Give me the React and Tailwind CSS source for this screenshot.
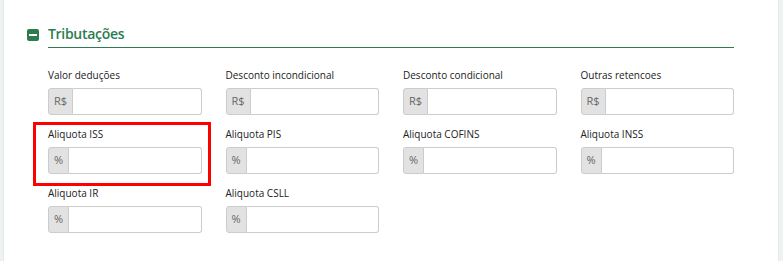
const FIELDS = [
  { label: 'Valor deduções', addon: 'R$' },
  { label: 'Desconto incondicional', addon: 'R$' },
  { label: 'Desconto condicional', addon: 'R$' },
  { label: 'Outras retencoes', addon: 'R$' },
  { label: 'Aliquota ISS', addon: '%', highlight: true },
  { label: 'Aliquota PIS', addon: '%' },
  { label: 'Aliquota COFINS', addon: '%' },
  { label: 'Aliquota INSS', addon: '%' },
  { label: 'Aliquota IR', addon: '%' },
  { label: 'Aliquota CSLL', addon: '%' },
];

function Field({ label, addon, highlight }) {
  return (
    <div className="relative">
      {highlight && (
        <div className="absolute -left-[15px] -right-[9px] -top-[5px] -bottom-[12px] border-[3px] border-[#ff0000] pointer-events-none" />
      )}
      <label className="block text-[10px] leading-[15px] text-[#222] mb-[5px]">{label}</label>
      <div className="flex h-[27px]">
        <span
          className={`flex items-center justify-center ${addon === '%' ? 'w-[21px]' : 'w-[25px]'} bg-[#e2e2e2] border border-[#cccccc] rounded-l-[3px] text-[11px] text-[#666]`}
        >
          {addon}
        </span>
        <input
          type="text"
          className="flex-1 min-w-0 bg-white border border-l-0 border-[#cccccc] rounded-r-[3px] outline-none"
        />
      </div>
    </div>
  );
}

export default function App() {
  return (
    <div className="flex w-[783px] h-[261px] bg-white font-['Open_Sans',sans-serif]">
      <div className="w-[4px] bg-[#eef3f0] border-r border-[#e3ebe6]" />

      <main className="flex-1 bg-white">
        {/* Section title */}
        <div className="flex items-center pl-[23px] pt-[22px] h-[47px]">
          <span className="w-[12px] h-[12px] rounded-[2px] bg-[#2b7d50] flex items-center justify-center">
            <span className="w-[8px] h-[2px] bg-white" />
          </span>
          <h2 className="ml-[9px] text-[14px] font-semibold tracking-[-0.3px] text-[#2b7d50] leading-none -mt-[2px]">Tributações</h2>
        </div>
        <div className="mx-[44px] border-t border-[#2b7d50]" />

        {/* Fields */}
        <div className="mx-[44px] mt-[20px] grid grid-cols-4 gap-x-[24px] gap-y-[12px]">
          {FIELDS.map((f) => (
            <Field key={f.label} {...f} />
          ))}
        </div>
      </main>

      <div className="w-[5px] bg-[#eef3f0] border-l border-[#e3ebe6]" />
    </div>
  );
}
